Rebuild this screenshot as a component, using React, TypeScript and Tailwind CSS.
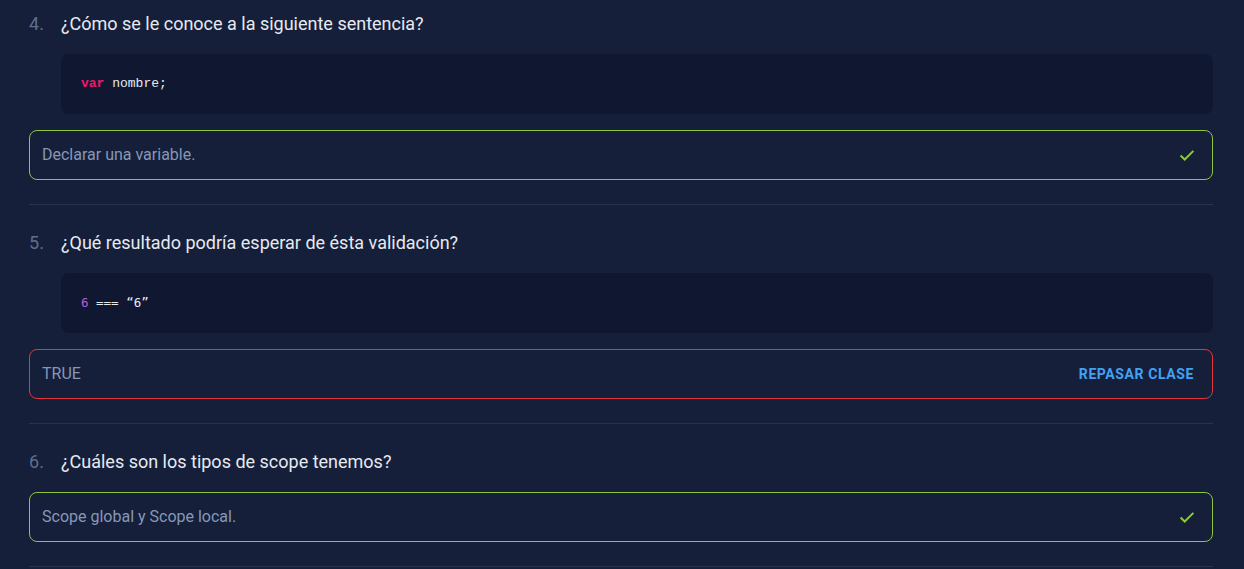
import type { ReactNode } from 'react'

type Item = {
  n: number
  q: string
  code?: ReactNode
  answer: string
  ok: boolean
}

const ITEMS: Item[] = [
  {
    n: 4,
    q: '¿Cómo se le conoce a la siguiente sentencia?',
    code: (
      <span className="font-['Liberation_Mono',monospace] text-[13px]">
        <span className="font-bold text-[#f2186d]">var</span>
        <span className="text-[#e8ebf2]"> nombre;</span>
      </span>
    ),
    answer: 'Declarar una variable.',
    ok: true,
  },
  {
    n: 5,
    q: '¿Qué resultado podría esperar de ésta validación?',
    code: (
      <span className="font-['DejaVu_Sans_Mono',monospace] text-[12.5px]">
        <span className="text-[#b55fd6]">6</span>
        <span className="text-[#e8ebf2]"> === “6”</span>
      </span>
    ),
    answer: 'TRUE',
    ok: false,
  },
  {
    n: 6,
    q: '¿Cuáles son los tipos de scope tenemos?',
    answer: 'Scope global y Scope local.',
    ok: true,
  },
]

function Check() {
  return (
    <svg width="22" height="22" viewBox="0 0 24 24" fill="none" className="text-[#8dc63f]">
      <path d="M5 12.5l4.5 4.5L19 7.5" stroke="currentColor" strokeWidth="2.2" />
    </svg>
  )
}

export default function App() {
  return (
    <div className="min-h-[569px] bg-[#151f3a] pl-[29px] pr-[31px] pt-[10px] font-['Roboto',sans-serif]">
      {ITEMS.map((item, i) => (
        <div key={item.n} className={i > 0 ? 'pt-6' : ''}>
          <div className="flex h-7 items-baseline leading-7">
            <span className="w-8 text-[18px] text-[#5d6f8f]">{item.n}.</span>
            <span className="text-[18px] text-[#e6eaf1]">{item.q}</span>
          </div>

          {item.code && (
            <div className="mt-4 ml-8 flex h-[60px] items-center rounded-lg bg-[#0f1731] px-5">
              {item.code}
            </div>
          )}

          <div
            className={
              'mt-4 flex h-[50px] items-center justify-between rounded-lg border pl-3 ' +
              (item.ok ? 'border-[#8dc63f] pr-[14px]' : 'border-[#e5333b] pr-[18px]')
            }
          >
            <span className="text-[16px] text-[#8797b6]">{item.answer}</span>
            {item.ok ? (
              <Check />
            ) : (
              <span className="text-[14px] font-bold tracking-[0.6px] text-[#42a1f0]">
                REPASAR CLASE
              </span>
            )}
          </div>

          <div className="mt-6 h-px bg-[#243352]" />
        </div>
      ))}
    </div>
  )
}
